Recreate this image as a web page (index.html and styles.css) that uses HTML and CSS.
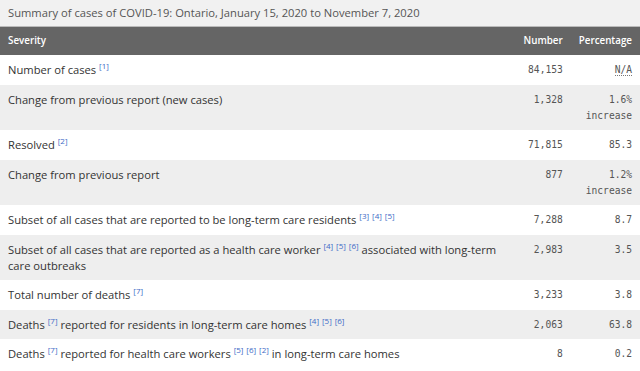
FILE: index.html
```html
<!DOCTYPE html>
<html>
<head>
<meta charset="utf-8">
<link rel="stylesheet" href="styles.css">
</head>
<body>
<table class="tbl">
  <caption class="cap">Summary of cases of COVID-19: Ontario, January 15, 2020 to November 7, 2020</caption>
  <thead>
    <tr class="head">
      <th class="h-sev">Severity</th>
      <th class="h-num">Number</th>
      <th class="h-pct">Percentage</th>
    </tr>
  </thead>
  <tbody>
    <tr class="r">
      <td class="lab">Number of cases <sup class="fn">[1]</sup></td>
      <td class="num">84,153</td>
      <td class="pct"><abbr class="na">N/A</abbr></td>
    </tr>
    <tr class="r alt">
      <td class="lab">Change from previous report (new cases)</td>
      <td class="num">1,328</td>
      <td class="pct">1.6%<br>increase</td>
    </tr>
    <tr class="r">
      <td class="lab">Resolved <sup class="fn">[2]</sup></td>
      <td class="num">71,815</td>
      <td class="pct">85.3</td>
    </tr>
    <tr class="r alt">
      <td class="lab">Change from previous report</td>
      <td class="num">877</td>
      <td class="pct">1.2%<br>increase</td>
    </tr>
    <tr class="r">
      <td class="lab">Subset of all cases that are reported to be long-term care residents <sup class="fn">[3]</sup> <sup class="fn">[4]</sup> <sup class="fn">[5]</sup></td>
      <td class="num">7,288</td>
      <td class="pct">8.7</td>
    </tr>
    <tr class="r alt">
      <td class="lab">Subset of all cases that are reported as a health care worker <sup class="fn">[4]</sup> <sup class="fn">[5]</sup> <sup class="fn">[6]</sup> associated with long-term care outbreaks</td>
      <td class="num">2,983</td>
      <td class="pct">3.5</td>
    </tr>
    <tr class="r">
      <td class="lab">Total number of deaths <sup class="fn">[7]</sup></td>
      <td class="num">3,233</td>
      <td class="pct">3.8</td>
    </tr>
    <tr class="r alt">
      <td class="lab">Deaths <sup class="fn">[7]</sup> reported for residents in long-term care homes <sup class="fn">[4]</sup> <sup class="fn">[5]</sup> <sup class="fn">[6]</sup></td>
      <td class="num">2,063</td>
      <td class="pct">63.8</td>
    </tr>
    <tr class="r">
      <td class="lab">Deaths <sup class="fn">[7]</sup> reported for health care workers <sup class="fn">[5]</sup> <sup class="fn">[6]</sup> <sup class="fn">[2]</sup> in long-term care homes</td>
      <td class="num">8</td>
      <td class="pct">0.2</td>
    </tr>
  </tbody>
</table>
</body>
</html>
```
FILE: styles.css
```css
html, body {
  margin: 0;
  padding: 0;
  background: #fff;
}
body {
  font-family: "Open Sans", "Noto Sans", sans-serif;
  color: #333;
  width: 640px;
}
.tbl {
  width: 640px;
  border-collapse: collapse;
  table-layout: auto;
}
.cap {
  background: #f1f1f1;
  color: #555;
  font-size: 11.2px;
  text-align: left;
  padding: 4px 8px 4px 8px;
  line-height: 18px;
}
.head {
  background: #656565;
  color: #fff;
  border-top: 1px solid #bbb;
}
.head th {
  font-size: 9.8px;
  font-weight: 600;
  padding: 6px 8px;
  line-height: 16px;
}
.h-sev { text-align: left; }
.h-num, .h-pct { text-align: right; white-space: nowrap; }
.h-num { width: 38px; }
.h-pct { width: 51px; }
.r td {
  vertical-align: top;
  padding: 7px 8px 6.5px 8px;
  line-height: 16px;
}
.r.alt { background: #eeeeee; }
.lab {
  font-size: 11.2px;
}
.num, .pct {
  font-family: "DejaVu Sans Mono", "Liberation Mono", monospace;
  font-size: 9.6px;
  color: #555;
  text-align: right;
  white-space: nowrap;
}
.fn {
  color: #3d6ac6;
  font-size: 8px;
  line-height: 0;
  vertical-align: 5px;
}
.na {
  text-decoration: none;
  border-bottom: 1px dotted #777;
}
```
